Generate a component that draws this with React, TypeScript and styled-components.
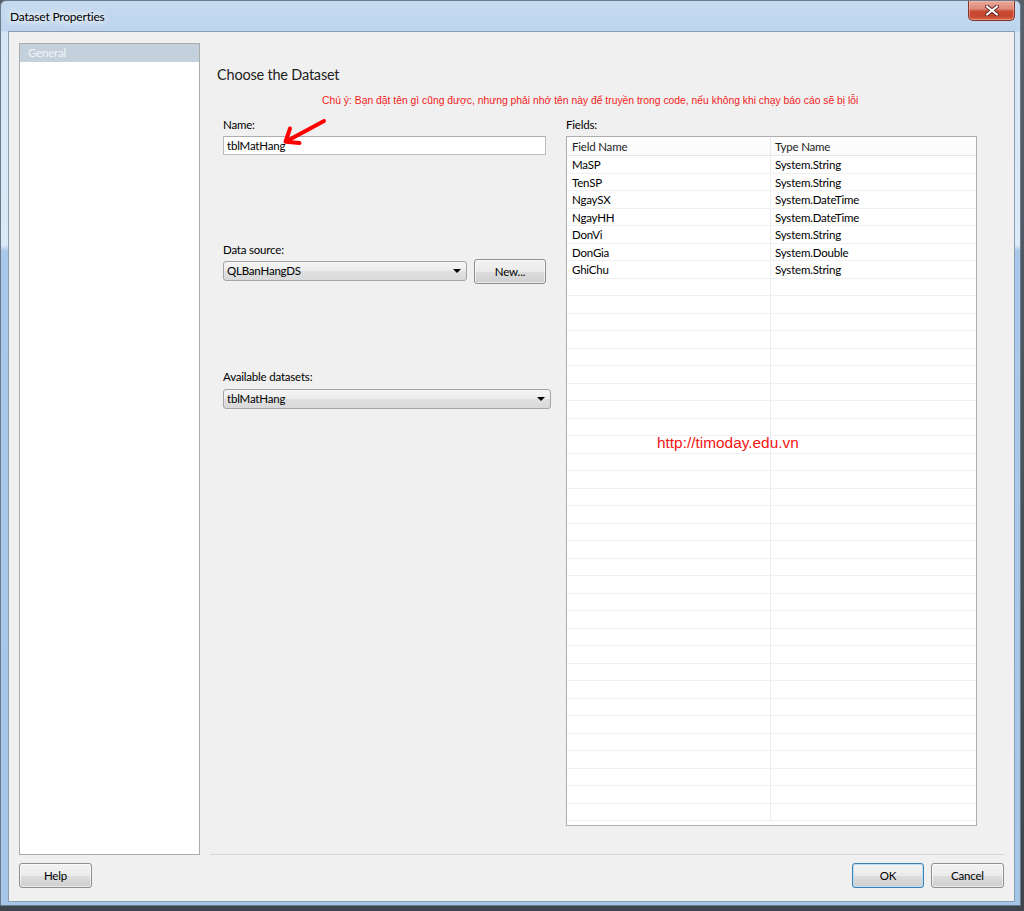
import React from "react";
import styled, { createGlobalStyle } from "styled-components";

const GlobalStyle = createGlobalStyle`
  html, body { margin: 0; padding: 0; }
  body {
    width: 1024px; height: 911px; overflow: hidden;
    background: #434a52;
    font-family: Lato, "Noto Sans", sans-serif;
  }
  * { box-sizing: border-box; }
`;

const uiText = `
  font-size: 11.5px;
  letter-spacing: -0.2px;
`;

const Screen = styled.div`
  width: 1024px;
  height: 911px;
  background: linear-gradient(180deg, #56606b 0, #3e454d 100%);
`;

const Window = styled.div`
  position: relative;
  width: 1021px;
  height: 906px;
  display: flex;
  flex-direction: column;
  border: 1px solid #6c7a89;
  border-radius: 6px 6px 0 0;
  padding: 0 5px 3px 7px;
  background: linear-gradient(
    180deg,
    #c6dbf1 0px,
    #bcd4ed 30px,
    #d6e6f6 31px,
    #dce9f7 244px,
    #a9c8ea 250px,
    #a6c6e9 100%
  );
`;

const TitleBar = styled.div`
  height: 30px;
  flex: none;
  display: flex;
  justify-content: space-between;
  align-items: flex-start;
`;

const Title = styled.div`
  margin-top: 8px;
  padding-left: 2px;
  font-size: 12px;
  letter-spacing: -0.2px;
  line-height: 16px;
  color: #000;
  text-shadow: 0 0 6px #fff, 0 0 10px #fff, 0 0 14px #fff;
`;

const CloseButton = styled.div`
  width: 47px;
  height: 20px;
  display: flex;
  align-items: center;
  justify-content: center;
  border: 1px solid #82352b;
  border-top: none;
  border-radius: 0 0 5px 5px;
  background: linear-gradient(180deg, #e9a99c 0%, #dd8a78 40%, #c94a33 55%, #c8452e 80%, #d36a50 100%);
  box-shadow: inset 0 0 0 1px rgba(255, 200, 190, 0.45);
`;

const Body = styled.div`
  flex: 1;
  display: flex;
  flex-direction: column;
  border: 1px solid #8a9db3;
  background: #f0f0f0;
  padding: 11px 10px 0 10px;
`;

const Main = styled.div`
  height: 812px;
  flex: none;
  display: flex;
  gap: 10px;
`;

const NavPanel = styled.div`
  width: 181px;
  flex: none;
  border: 1px solid #acacac;
  background: #fff;
`;

const NavItem = styled.div<{ $selected?: boolean }>`
  height: 18px;
  padding-left: 8px;
  ${uiText}
  line-height: 18px;
  color: ${(p) => (p.$selected ? "#f2f5f8" : "#000")};
  background: ${(p) => (p.$selected ? "#c4d0dc" : "transparent")};
`;

const Content = styled.div`
  flex: 1;
  display: flex;
  flex-direction: column;
  border-bottom: 1px solid #d4d4d4;
  padding: 0 27px 0 7px;
`;

const Heading = styled.div`
  margin-top: 22px;
  font-size: 14.5px;
  letter-spacing: -0.2px;
  line-height: 20px;
  color: #1e1e1e;
`;

const Note = styled.div`
  margin: 9px 0 0 105px;
  font-family: "Liberation Sans", Arial, sans-serif;
  font-size: 10.35px;
  line-height: 14px;
  color: #f21b1b;
  white-space: nowrap;
`;

const Form = styled.div`
  margin: 9px 0 0 6px;
  display: grid;
  grid-template-columns: 328px 411px;
  column-gap: 15px;
`;

const Column = styled.div`
  display: flex;
  flex-direction: column;
  align-items: flex-start;
`;

const Label = styled.div<{ $top?: number }>`
  margin-top: ${(p) => p.$top ?? 0}px;
  ${uiText}
  line-height: 16px;
  height: 16px;
  color: #000;
`;

const TextBox = styled.div`
  margin-top: 3px;
  width: 323px;
  height: 19px;
  border: 1px solid #b9bcc1;
  border-top-color: #abadb3;
  background: #fff;
  padding-left: 3px;
  ${uiText}
  line-height: 17px;
  color: #000;
`;

const ComboRow = styled.div`
  margin-top: 1px;
  display: flex;
  gap: 7px;
  align-items: flex-start;
`;

const Combo = styled.div<{ $w: number; $top?: number }>`
  position: relative;
  margin-top: ${(p) => p.$top ?? 0}px;
  width: ${(p) => p.$w}px;
  height: 20px;
  border: 1px solid #a5a5a5;
  border-radius: 3px;
  background: linear-gradient(180deg, #f5f5f5 0%, #ececec 50%, #e0e0e0 51%, #d9d9d9 100%);
  padding-left: 3px;
  ${uiText}
  line-height: 18px;
  color: #000;
`;

const ComboArrow = styled.span`
  position: absolute;
  right: 5px;
  top: 7px;
  width: 0;
  height: 0;
  border-left: 4px solid transparent;
  border-right: 4px solid transparent;
  border-top: 4px solid #000;
`;

const Button = styled.div<{ $w: number; $default?: boolean }>`
  width: ${(p) => p.$w}px;
  height: 25px;
  flex: none;
  display: flex;
  align-items: center;
  justify-content: center;
  border: 1px solid ${(p) => (p.$default ? "#3c7fb1" : "#8e8f8f")};
  border-radius: 3px;
  background: linear-gradient(180deg, #f2f2f2 0%, #ebebeb 50%, #dddddd 51%, #cfcfcf 100%);
  box-shadow: inset 0 0 0 1px ${(p) => (p.$default ? "#b9e0f8" : "rgba(255,255,255,0.6)")};
  ${uiText}
  color: #000;
`;

const TableBox = styled.div`
  position: relative;
  margin-top: 3px;
  width: 411px;
  height: 690px;
  border: 1px solid #aeaeae;
  background: #fff;
  overflow: hidden;
`;

const HeaderRow = styled.div`
  display: grid;
  grid-template-columns: 204px 1fr;
  height: 19px;
  border-bottom: 1px solid #e5e5e5;
  background: linear-gradient(180deg, #ffffff 0%, #f9fafb 100%);
`;

const Row = styled.div`
  display: grid;
  grid-template-columns: 204px 1fr;
  height: 17.5px;
  border-bottom: 1px solid #f0f0f0;
`;

const Cell = styled.div<{ $first?: boolean }>`
  padding-left: ${(p) => (p.$first ? 5 : 4)}px;
  border-right: ${(p) => (p.$first ? "1px solid #ececec" : "none")};
  ${uiText}
  line-height: 18px;
  color: #000;
  white-space: nowrap;
  overflow: hidden;
`;

const HeadCell = styled(Cell)`
  line-height: 20px;
  color: #1e1e1e;
`;

const Watermark = styled.div`
  position: absolute;
  left: 90px;
  top: 297px;
  font-family: "Liberation Sans", Arial, sans-serif;
  font-size: 15.4px;
  line-height: 18px;
  color: #f41515;
  white-space: nowrap;
`;

const Footer = styled.div`
  flex: none;
  height: 46px;
  padding-top: 8px;
  display: flex;
  align-items: flex-start;
  gap: 7px;
`;

const Spacer = styled.div`
  flex: 1;
`;

const ArrowMark = styled.svg`
  position: absolute;
  left: 279px;
  top: 109px;
  pointer-events: none;
`;

const fields: [string, string][] = [
  ["MaSP", "System.String"],
  ["TenSP", "System.String"],
  ["NgaySX", "System.DateTime"],
  ["NgayHH", "System.DateTime"],
  ["DonVi", "System.String"],
  ["DonGia", "System.Double"],
  ["GhiChu", "System.String"],
];

const TOTAL_ROWS = 38;

export default function App() {
  const rows: [string, string][] = [
    ...fields,
    ...Array.from({ length: TOTAL_ROWS - fields.length }, () => ["", ""] as [string, string]),
  ];
  return (
    <Screen>
      <GlobalStyle />
      <Window>
        <TitleBar>
          <Title>Dataset Properties</Title>
          <CloseButton>
            <svg width="14" height="11" viewBox="0 0 14 11">
              <path d="M2 1.5 L12 9.5 M12 1.5 L2 9.5" stroke="#5a2620" strokeWidth="4" strokeLinecap="round" />
              <path d="M2 1.5 L12 9.5 M12 1.5 L2 9.5" stroke="#ffffff" strokeWidth="2.2" strokeLinecap="round" />
            </svg>
          </CloseButton>
        </TitleBar>
        <Body>
          <Main>
            <NavPanel>
              <NavItem $selected>General</NavItem>
            </NavPanel>
            <Content>
              <Heading>Choose the Dataset</Heading>
              <Note>
                Chú ý: Bạn đặt tên gì cũng được, nhưng phải nhớ tên này để truyền trong code, nếu không khi chạy báo cáo sẽ bị lỗi
              </Note>
              <Form>
                <Column>
                  <Label>Name:</Label>
                  <TextBox>tblMatHang</TextBox>
                  <Label $top={87}>Data source:</Label>
                  <ComboRow>
                    <Combo $w={244} $top={2}>
                      QLBanHangDS
                      <ComboArrow />
                    </Combo>
                    <Button $w={72}>New...</Button>
                  </ComboRow>
                  <Label $top={85}>Available datasets:</Label>
                  <Combo $w={328} $top={4}>
                    tblMatHang
                    <ComboArrow />
                  </Combo>
                </Column>
                <Column>
                  <Label>Fields:</Label>
                  <TableBox>
                    <HeaderRow>
                      <HeadCell $first>Field Name</HeadCell>
                      <HeadCell>Type Name</HeadCell>
                    </HeaderRow>
                    {rows.map(([name, type], i) => (
                      <Row key={i}>
                        <Cell $first>{name}</Cell>
                        <Cell>{type}</Cell>
                      </Row>
                    ))}
                    <Watermark>http://timoday.edu.vn</Watermark>
                  </TableBox>
                </Column>
              </Form>
            </Content>
          </Main>
          <Footer>
            <Button $w={73}>Help</Button>
            <Spacer />
            <Button $w={72} $default>
              OK
            </Button>
            <Button $w={73}>Cancel</Button>
          </Footer>
        </Body>
        <ArrowMark width="50" height="40" viewBox="0 0 50 40">
          <path
            d="M44 11 L6 31.5 M10 18.5 L5.5 31.7 L19.5 33"
            fill="none"
            stroke="#ff0000"
            strokeWidth="4"
            strokeLinecap="round"
            strokeLinejoin="round"
          />
        </ArrowMark>
      </Window>
    </Screen>
  );
}
